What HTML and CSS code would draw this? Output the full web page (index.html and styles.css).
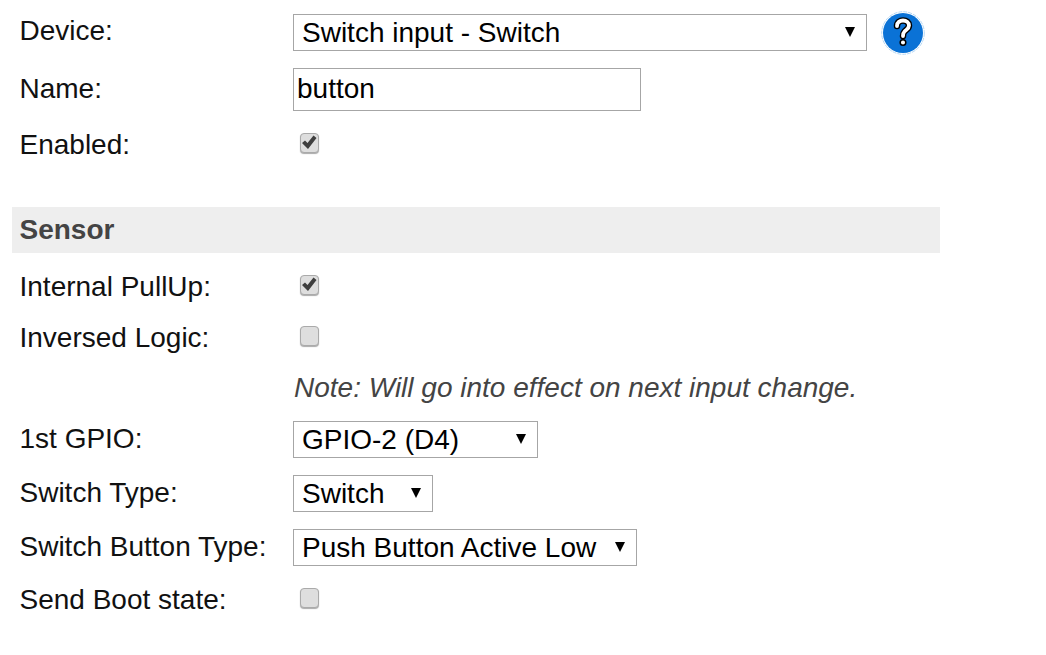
FILE: index.html
```html
<!DOCTYPE html>
<html lang="en">
<head>
  <meta charset="UTF-8">
  <title>Device settings</title>
  <link rel="stylesheet" href="styles.css">
</head>
<body>

  <form class="container">
    <div class="row row-device">
      <label>Device:</label>
      <div class="select-wrap w-device">
        <select><option>Switch input - Switch</option></select>
        <span class="arrow"></span>
      </div>
      <a class="help" href="#">
        <svg width="44" height="44" viewBox="0 0 44 44">
          <circle cx="22" cy="22" r="21.300" fill="#fff" stroke="#b5d8f5" stroke-width="1" stroke-dasharray="4 1"/>
          <circle cx="22" cy="22" r="20" fill="#0a72d6"/>
          <path d="M16 15C16 11 19 9.500 22 9.500C25.500 9.500 28 11.500 28 14.500C28 17.500 25.500 18.500 23.500 20.500C22 22 22 23 22 25" fill="none" stroke="#000" stroke-width="6.500" stroke-linecap="round"/>
          <path d="M16 15C16 11 19 9.500 22 9.500C25.500 9.500 28 11.500 28 14.500C28 17.500 25.500 18.500 23.500 20.500C22 22 22 23 22 25" fill="none" stroke="#fff" stroke-width="3.800" stroke-linecap="round"/>
          <circle cx="22" cy="31.500" r="2.800" fill="#fff" stroke="#000" stroke-width="1.500"/>
        </svg>
      </a>
    </div>

    <div class="row row-name">
      <label>Name:</label>
      <input class="text-input" type="text" value="button">
    </div>

    <div class="row row-check row-enabled">
      <label>Enabled:</label>
      <input class="check" type="checkbox" checked>
    </div>

    <h3 class="section">Sensor</h3>

    <div class="row row-check row-pullup">
      <label>Internal PullUp:</label>
      <input class="check" type="checkbox" checked>
    </div>

    <div class="row row-check row-inversed">
      <label>Inversed Logic:</label>
      <input class="check" type="checkbox">
    </div>

    <div class="row row-check row-note">
      <label></label>
      <span class="note">Note: Will go into effect on next input change.</span>
    </div>

    <div class="row row-select">
      <label>1st GPIO:</label>
      <div class="select-wrap w-gpio">
        <select><option>GPIO-2 (D4)</option></select>
        <span class="arrow"></span>
      </div>
    </div>

    <div class="row row-select">
      <label>Switch Type:</label>
      <div class="select-wrap w-type">
        <select><option>Switch</option></select>
        <span class="arrow"></span>
      </div>
    </div>

    <div class="row row-select">
      <label>Switch Button Type:</label>
      <div class="select-wrap w-button">
        <select><option>Push Button Active Low</option></select>
        <span class="arrow"></span>
      </div>
    </div>

    <div class="row row-check row-boot">
      <label>Send Boot state:</label>
      <input class="check" type="checkbox">
    </div>
  </form>

</body>
</html>
```

FILE: styles.css
```css
body {
  margin: 0;
  background-color: white;
  font-family: "Liberation Sans", Arial, sans-serif;
  font-size: 28px;
  color: black;
}

.container {
  width: 928px;
  margin-left: 12px;
  padding-top: 14px;
  display: flex;
  flex-direction: column;
}

.row {
  display: flex;
  align-items: center;
  height: 37px;
  margin-top: 17px;
}

.row label {
  width: 273.500px;
  padding-left: 7.500px;
  flex-shrink: 0;
  color: #111;
  position: relative;
  top: -1px;
}

.row-device { margin-top: 0; }
.row-name { height: 43px; }
.row-check { height: 32px; }
.row-enabled { margin-top: 16px; }
.row-pullup { margin-top: 16px; }
.row-inversed { margin-top: 19px; }
.row-note { margin-top: 20px; }
.row-boot { margin-top: 16px; }

.row-device label { top: -2px; }
.row-check label { top: 2px; }

.select-wrap {
  position: relative;
  height: 37px;
}

.w-device { width: 574px; }
.w-gpio { width: 245px; }
.w-type { width: 140px; }
.w-button { width: 344px; }

select {
  appearance: none;
  width: 100%;
  height: 100%;
  margin: 0;
  padding: 0 0 0 8px;
  border: 1px solid #a6a6a6;
  border-radius: 0;
  background-color: white;
  font: inherit;
  color: black;
}

.arrow {
  position: absolute;
  right: 12px;
  top: 13px;
  border-left: 5px solid transparent;
  border-right: 5px solid transparent;
  border-top: 10px solid black;
}

.text-input {
  width: 348px;
  height: 43px;
  box-sizing: border-box;
  margin: 0;
  padding: 0 3px 2px;
  border: 1px solid #a6a6a6;
  font: inherit;
  color: black;
}

.help {
  display: block;
  height: 44px;
  margin-left: 14px;
}

.check {
  appearance: none;
  box-sizing: border-box;
  width: 19px;
  height: 20px;
  margin: 0 0 0 7px;
  border: 1px solid #aaa;
  border-radius: 4px;
  background-color: #dedede;
  box-shadow: 0 1px 1px #aaa;
}

.check:checked::before {
  content: "";
  display: block;
  width: 17px;
  height: 18px;
  background-color: #3f3f3f;
  clip-path: polygon(1px 9px, 4px 6.500px, 6.500px 9px, 12.500px 1.500px, 15.500px 4px, 7px 15px);
}

.section {
  margin: 48px 0 0;
  height: 46px;
  line-height: 46px;
  padding-left: 7.500px;
  background-color: #eeeeee;
  font-size: 28px;
  font-weight: bold;
  color: #444;
}

.note {
  font-style: italic;
  color: #444;
  padding-left: 1px;
}
```
